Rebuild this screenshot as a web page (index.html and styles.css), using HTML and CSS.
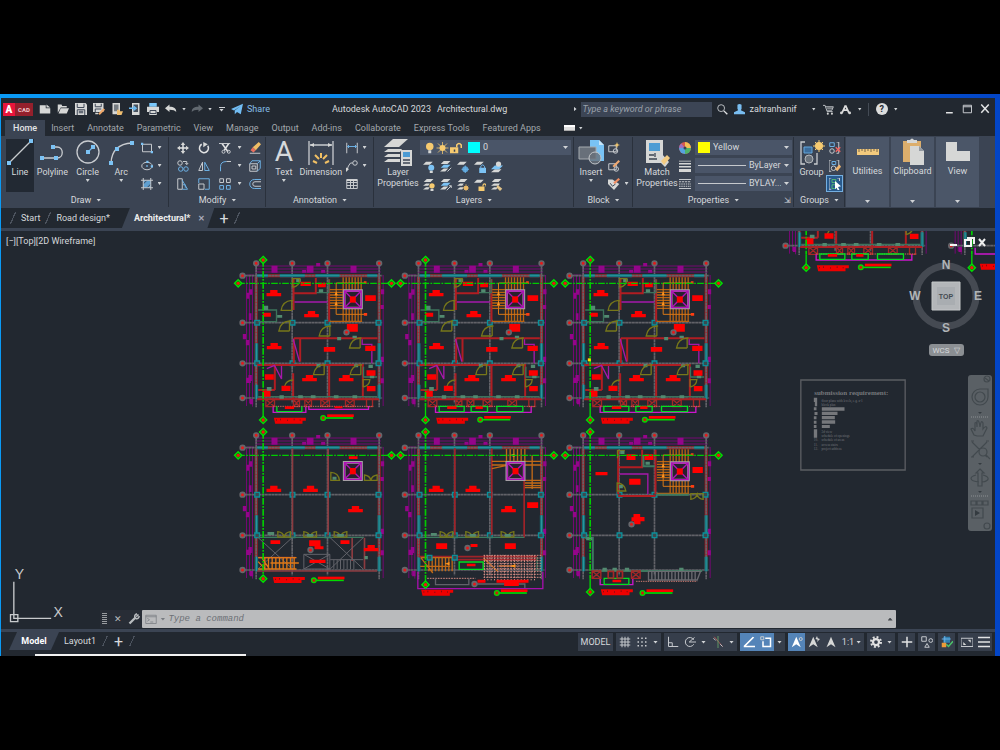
FILE: index.html
```html
<!DOCTYPE html>
<html lang="en">
<head>
<meta charset="utf-8">
<title>Autodesk AutoCAD 2023 - Architectural.dwg</title>
<link rel="stylesheet" href="styles.css">
</head>
<body>
<div class="window">
<header class="titlebar">
  <div class="quick">
    <button class="logo" aria-label="Application menu"><b>A</b><span>CAD</span></button>
    <button class="qi" aria-label="New"><svg viewBox="0 0 16 16"><path class="f" d="M1 3h8v4h6v7H1zM10 2l5 4h-5z"/></svg></button>
    <button class="qi" aria-label="Open"><svg viewBox="0 0 16 16"><path class="f" d="M1 13V2h5l1 2h6v2H5zM5 7h11l-3 7H2z"/></svg></button>
    <button class="qi" aria-label="Save"><svg viewBox="0 0 16 16"><path class="f" d="M0 0h14l2 2v14H0z"/><path class="k" d="M3 1v5h9V1M3 16V9h10v7M5 11h6M5 13h6"/></svg></button>
    <button class="qi" aria-label="Save as"><svg viewBox="0 0 16 16"><path class="f" d="M0 0h14v12H0z"/><path class="k" d="M3 1v4h8V1M3 12V8h8"/><path d="M7 14l7-7 2 2-7 7z" fill="#f0a868"/><path class="f" d="M3 13h4v2H3z"/></svg></button>
    <button class="qi" aria-label="Open from mobile"><svg viewBox="0 0 16 16"><path class="f" d="M2 0h10v15H2z"/><path d="M4 2h6v9H4z" fill="#777d83"/><path d="M8 9h3l1 2h4l-2 5H8z" fill="#eebd70"/></svg></button>
    <button class="qi" aria-label="Save to mobile"><svg viewBox="0 0 16 16"><path class="f" d="M4 0h10v16H4z"/><path d="M6 2h6v10H6z" fill="#47515d"/><path d="M0 6h6V3l5 4-5 4V8H0z" fill="#6bb9ef"/></svg></button>
    <button class="qi" aria-label="Plot"><svg viewBox="0 0 16 16"><path d="M3 0h10v5H3z" fill="#79c7fa"/><path class="f" d="M0 5h16v7h-3v4H3v-4H0z"/><path class="k" d="M4 10h8v4H4z"/></svg></button>
    <button class="qi" aria-label="Undo"><svg viewBox="0 0 16 16"><path class="f" d="M0 7l6-5v3c6 0 9 2 9 7-2-2-4-3-9-3v3z"/></svg></button>
    <span class="caret pad"></span>
    <button class="qi dim" aria-label="Redo"><svg viewBox="0 0 16 16"><path d="M16 7l-6-5v3C4 5 1 7 1 12c2-2 4-3 9-3v3z" fill="#626970"/></svg></button>
    <span class="caret pad"></span><span class="over"><i class="caret"></i></span>
    <button class="share"><svg viewBox="0 0 16 16"><path d="M0 8L16 1l-3 14-5-3-3 3v-5l8-6-9 6z" fill="#72bdf3"/></svg>Share</button>
  </div>
  <div class="doc-title"><span>Autodesk AutoCAD 2023</span><span>Architectural.dwg</span></div>
  <div class="account">
    <span class="right-arrow"></span>
    <input class="search" type="text" aria-label="Search" placeholder="Type a keyword or phrase">
    <button class="ai" aria-label="Search"><svg viewBox="0 0 16 16"><circle class="s" cx="6" cy="6" r="5"/><path class="s w2" d="M10 10l5 5"/></svg></button>
    <button class="ai" aria-label="User"><svg viewBox="0 0 16 16"><path d="M5 1q3-2 6 0v6l-1 2 6 3v3H0v-3l6-3-1-2z" fill="#79bdf0"/></svg></button>
    <span class="user">zahranhanif</span><span class="caret"></span>
    <button class="ai" aria-label="App store"><svg viewBox="0 0 16 16"><path class="s" d="M0 2h3l3 9h8M4 4h11l-2 5H6M6 6h8"/><circle class="f" cx="7" cy="14" r="1.500"/><circle class="f" cx="13" cy="14" r="1.500"/></svg></button>
    <button class="ai" aria-label="Autodesk"><svg viewBox="0 0 16 16"><path d="M8 2L3 13M8 2l5 11M5 9h6" fill="none" stroke="#ddd" stroke-width="2.500"/><circle class="f" cx="2" cy="13" r="2"/><circle class="f" cx="14" cy="13" r="2"/></svg></button>
    <span class="caret"></span><i class="vsep"></i>
    <button class="help" aria-label="Help">?</button><span class="caret"></span>
  </div>
  <div class="wincontrols">
    <button aria-label="Minimise"><svg viewBox="0 0 16 16"><path class="s w2" d="M4 13h9"/></svg></button>
    <button aria-label="Maximise"><svg viewBox="0 0 16 16"><path class="s" d="M3 3h11v10H3zM3 5h11"/></svg></button>
    <button aria-label="Close"><svg viewBox="0 0 16 16"><path class="s w2" d="M3 2l10 11M13 2L3 13"/></svg></button>
  </div>
</header>
<nav class="tabs">
  <button class="on">Home</button><button>Insert</button><button>Annotate</button><button>Parametric</button><button>View</button><button>Manage</button><button>Output</button><button>Add-ins</button><button>Collaborate</button><button>Express Tools</button><button>Featured Apps</button>
  <button class="mini" aria-label="Minimise ribbon"><i></i></button><span class="caret"></span>
</nav>
<section class="ribbon">
  <div class="panel draw">
    <div class="body">
      <button class="big sel"><svg viewBox="0 0 28 28"><path class="s" d="M3 24L25 2"/><path class="b" d="M1 22h4v4H1zM23 0h4v4h-4z"/></svg>Line</button>
      <button class="big"><svg viewBox="0 0 28 28"><path class="s" d="M4 19h15c7 0 7-11 0-11h-4"/><path class="b" d="M2 17h4v4H2zM16 17h4v4h-4zM13 6h4v4h-4z"/></svg>Polyline</button>
      <button class="big"><svg viewBox="0 0 28 28"><circle class="s" cx="14" cy="13" r="11"/><path class="sb" d="M14 13l5-5"/><path class="b" d="M12 11h4v4h-4zM17 6h4v4h-4z"/></svg>Circle<i class="caret"></i></button>
      <button class="big"><svg viewBox="0 0 28 28"><path class="s" d="M4 24Q5 5 25 4"/><path class="b" d="M2 22h4v4H2zM8 8h4v4H8zM23 2h4v4h-4z"/></svg>Arc<i class="caret"></i></button>
      <div class="grid g2">
        <button aria-label="Rectangle"><svg viewBox="0 0 16 16"><path class="s" d="M2 3h12v10H2z"/><path class="b" d="M0 1h3v3H0zM13 12h3v3h-3z"/></svg></button><i class="caret"></i>
        <button aria-label="Ellipse"><svg viewBox="0 0 16 16"><ellipse class="s" cx="8" cy="8" rx="7" ry="5"/><path class="b" d="M7 7h2v2H7zM13 7h3v3h-3zM7 1h3v3H7z"/></svg></button><i class="caret"></i>
        <button aria-label="Hatch"><svg viewBox="0 0 16 16"><path fill="#5f9fd0" d="M3 3h10v10H3z"/><path class="k" d="M3 8l5-5M8 13l5-5"/><path class="s" d="M3 0v16M13 0v16M0 3h16M0 13h16"/></svg></button><i class="caret"></i>
      </div>
    </div>
    <button class="ptitle">Draw<i class="caret"></i></button>
  </div>
  <div class="panel modify">
    <div class="body">
      <div class="grid g5">
        <button aria-label="Move"><svg viewBox="0 0 16 16"><path class="s w2" d="M8 2v12M2 8h12"/><path class="f" d="M8 0l3 4H5zM8 16l3-4H5zM0 8l4-3v6zM16 8l-4-3v6z"/></svg></button>
        <button aria-label="Rotate"><svg viewBox="0 0 16 16"><path class="s w2" d="M5 3a6 6 0 1 0 8 2"/><path class="f" d="M7 0l6 3-6 4z"/></svg></button>
        <button aria-label="Trim"><svg viewBox="0 0 16 16"><path class="s w2" d="M4 2l8 11M13 2L7 11"/><circle class="s" cx="6" cy="13" r="2"/><circle class="s" cx="13" cy="13" r="2"/><path class="s" d="M0 2h15"/></svg></button><i class="caret"></i>
        <button aria-label="Erase"><svg viewBox="0 0 16 16"><path d="M5 7l8-7 3 3-7 8z" fill="#eebd65"/><path d="M5 7l4 4-3 3-4-3z" fill="#e8705f"/><path class="s" d="M1 15h14"/></svg></button>
        <button aria-label="Copy"><svg viewBox="0 0 16 16"><circle class="s" cx="4" cy="4" r="3"/><circle class="sb" cx="5" cy="12" r="3"/><circle class="sb" cx="12" cy="12" r="3"/><path class="s" d="M8 2h5v4M11 4l2 2 2-2"/></svg></button>
        <button aria-label="Mirror"><svg viewBox="0 0 16 16"><path class="s" d="M6 3v11H1z"/><path class="sb" d="M9 3v11h6z"/></svg></button>
        <button aria-label="Fillet"><svg viewBox="0 0 16 16"><path class="sb" d="M2 15V9q0-7 8-7"/><path class="s" d="M10 2h6"/></svg></button><i class="caret"></i>
        <button aria-label="Explode"><svg viewBox="0 0 16 16"><path class="s" d="M1 5h10v10H1zM4 8h5v4H4z"/><path class="sb" d="M1 5l3-4h11v10l-4 4M11 5l4-4"/></svg></button>
        <button aria-label="Stretch"><svg viewBox="0 0 16 16"><path class="s" d="M1 1h6v14H1z"/><path class="sb" d="M7 3l7 12H7M8 9h3v4"/></svg></button>
        <button aria-label="Scale"><svg viewBox="0 0 16 16"><path class="sb" d="M1 7V1h14v14H9"/><path class="s" d="M1 8h7v7H1z"/></svg></button>
        <button aria-label="Array"><svg viewBox="0 0 16 16"><path class="s" d="M1 1h5v5H1zM10 1h5v5h-5z"/><path class="sb" d="M1 10h5v5H1zM10 10h5v5h-5z"/></svg></button><i class="caret"></i>
        <button aria-label="Offset"><svg viewBox="0 0 16 16"><path class="sb" d="M16 2H7a6 6 0 0 0 0 12h9"/><path class="s" d="M16 5H8a3 3 0 0 0 0 6h8"/></svg></button>
      </div>
    </div>
    <button class="ptitle">Modify<i class="caret"></i></button>
  </div>
  <div class="panel annot">
    <div class="body">
      <button class="big"><span class="letter">A</span>Text<i class="caret"></i></button>
      <button class="big"><svg viewBox="0 0 28 28"><path class="s" d="M2 2v24M26 2v24M3 6h22"/><path class="f" d="M3 6l4-2v4zM25 6l-4-2v4z"/><path d="M6 22l4 2M8 16l4 4M14 14v5M20 16l-4 4M22 22l-4 2" stroke="#f1c064" stroke-width="2"/></svg>Dimension</button>
      <div class="grid g2">
        <button aria-label="Linear"><svg viewBox="0 0 16 16"><path class="s" d="M1 1v14M15 1v14"/><path class="sb" d="M2 6h12M4 4L2 6l2 2M12 4l2 2-2 2"/></svg></button><i class="caret"></i>
        <button aria-label="Leader"><svg viewBox="0 0 16 16"><circle class="s" cx="12" cy="4" r="3"/><path class="s" d="M9 4H6Q3 7 1 14"/><path class="f" d="M0 10l4 2-4 4z"/></svg></button><i class="caret"></i>
        <button aria-label="Table"><svg viewBox="0 0 16 16"><path class="s" d="M1 2h14v12H1zM1 6h14M1 10h14M6 4v10M10 4v10"/><path class="f" d="M1 2h14v2H1z"/></svg></button>
      </div>
    </div>
    <button class="ptitle">Annotation<i class="caret"></i></button>
  </div>
  <div class="panel layers">
    <div class="body">
      <button class="big wide"><svg viewBox="0 0 28 28"><path class="f" d="M9 0h15l-9 8H0zM4 10h14l-2 3H0zM4 15h12v3H0zM4 20h12v3H0z"/><path class="f" d="M17 11h11v16H17z"/><path d="M19 13h7v5h-7z" fill="#4b9bd3"/><path class="k" d="M19 21h7M19 24h7"/></svg>Layer<br>Properties</button>
      <div class="layer-tools">
        <div class="combo"><svg class="states" viewBox="0 0 54 16"><circle cx="8" cy="6" r="5" fill="#f7cb70"/><path class="f" d="M6 11h4v4H6z"/><circle cx="25" cy="8" r="4" fill="#f7cb70"/><path d="M25 0v16M17 8h16M19 2l12 12M31 2L19 14" stroke="#f7cb70"/><path d="M35 7h11v8H35z" fill="#f7cb70"/><path d="M44 7V4q3-4 6 0v4" fill="none" stroke="#f7cb70" stroke-width="2"/><path fill="#3b4453" d="M40 10h2v3h-2z"/></svg><i class="swatch cyan"></i><select aria-label="Layer"><option>0</option></select><i class="caret"></i></div>
        <div class="grid gl">
          <button aria-label="Off"><svg viewBox="0 0 16 16"><path class="f" d="M4 1h9L9 5H0z"/><circle class="b" cx="11" cy="9" r="4"/><path class="f" d="M9 13h4v3H9z"/></svg></button>
          <button aria-label="Isolate"><svg viewBox="0 0 16 16"><path class="f" d="M5 0h9l-4 4H1z"/><path class="b" d="M5 5h9l-4 4H1z"/><path class="f" d="M5 10h6l-4 4H0z"/><path class="s" d="M10 14l5-5"/></svg></button>
          <button aria-label="Freeze"><svg viewBox="0 0 16 16"><path class="f" d="M4 1h9L9 5H0z"/><circle cx="11" cy="11" r="4" fill="#5ca3d7"/><path class="sb" d="M11 6v10M6 11h10"/></svg></button>
          <button aria-label="Lock"><svg viewBox="0 0 16 16"><path class="f" d="M4 1h9L9 5H0z"/><path class="b" d="M7 9h9v7H7z"/><path class="sb" d="M9 10V7q3-4 5 0v3"/></svg></button>
          <button aria-label="Make current"><svg viewBox="0 0 16 16"><path class="f" d="M5 11h9l-4 4H0z"/><path class="b" d="M5 6h11l-5 5H0z"/><circle class="f" cx="10" cy="4" r="3.500"/></svg></button>
          <button aria-label="On"><svg viewBox="0 0 16 16"><path class="f" d="M5 0h9l-4 4H1zM4 6h5l-2 3H0zM4 11h5l-2 3H0z"/><circle cx="12" cy="9" r="3.500" fill="#f7cb70"/><path class="f" d="M10 13h4v3h-4z"/></svg></button>
          <button aria-label="Unisolate"><svg viewBox="0 0 16 16"><path class="f" d="M5 0h9l-4 4H1z"/><path class="b" d="M5 5h9l-4 4H1z"/><path class="f" d="M5 10h6l-4 4H0z"/><path class="s" d="M9 15l6-6M12 9h3v3"/></svg></button>
          <button aria-label="Thaw"><svg viewBox="0 0 16 16"><path class="f" d="M5 0h9l-4 4H1zM4 6h5l-2 3H0zM4 11h5l-2 3H0z"/><circle cx="12" cy="12" r="3" fill="#e9b968"/><path d="M12 7v9M7 12h9M9 9l6 6M15 9l-6 6" stroke="#e9b968"/></svg></button>
          <button aria-label="Unlock"><svg viewBox="0 0 16 16"><path class="f" d="M4 1h9L9 5H0z"/><path d="M6 10h8v6H6z" fill="#f7cb70"/><path d="M12 10V8q2-3 4 0v2" fill="none" stroke="#f7cb70" stroke-width="1.500"/></svg></button>
          <button aria-label="Match layer"><svg viewBox="0 0 16 16"><path class="f" d="M5 0h9l-4 4H1zM4 6h8l-2 3H0zM4 11h5l-2 3H0z"/><path d="M9 8l6 5-3 3-5-5z" fill="#e2c489"/></svg></button>
        </div>
      </div>
    </div>
    <button class="ptitle">Layers<i class="caret"></i></button>
  </div>
  <div class="panel block">
    <div class="body">
      <button class="big"><svg viewBox="0 0 28 28"><path d="M13 1h9l5 5v16H13z" fill="#79c3f5"/><path d="M22 1v5h5z" fill="#c9e5f8"/><path d="M2 8h17v12H2z" fill="#68707a" stroke="#a6abb0"/><circle cx="18" cy="19" r="6" fill="#68707a" fill-opacity=".8" stroke="#c2c6c9"/></svg>Insert<i class="caret"></i></button>
      <div class="grid g2">
        <button aria-label="Create block"><svg viewBox="0 0 16 16"><path class="s" d="M1 5h10v8H1z"/><circle class="s" cx="10" cy="12" r="3"/><path d="M12 0l1 3 3 1-3 1-1 4-1-4-3-1 3-1z" fill="#f7cb70"/></svg></button><span></span>
        <button aria-label="Edit block"><svg viewBox="0 0 16 16"><path class="s" d="M1 5h10v8H1z"/><circle class="s" cx="11" cy="12" r="3"/><path d="M6 8l8-8 2 2-8 8z" fill="#f0a870"/></svg></button><span></span>
        <button aria-label="Edit attributes"><svg viewBox="0 0 16 16"><path class="f" d="M0 2h6l9 6-7 8-8-8z"/><path class="k" d="M3 7l3 4 4-3"/><path d="M7 6l7-6 2 2-7 6z" fill="#f08c60"/></svg></button><i class="caret"></i>
      </div>
    </div>
    <button class="ptitle">Block<i class="caret"></i></button>
  </div>
  <div class="panel props">
    <div class="body">
      <button class="big wide"><svg viewBox="0 0 28 28"><path class="f" d="M3 1h17v23H3z"/><path d="M6 4h11v8H6z" fill="#4c9cd4"/><path class="k" d="M6 16h5M6 20h8M12 14v4"/><path class="f" d="M14 13l5 2 7 8-4 5-7-7z"/><path d="M18 22l6-6 3 3-6 7z" fill="#f3cc83"/></svg>Match<br>Properties</button>
      <div class="prop-tools">
        <svg viewBox="0 0 16 16"><circle cx="8" cy="8" r="8" fill="#d65a50"/><path d="M8 8V0a8 8 0 0 1 8 8z" fill="#f3bf55"/><path d="M8 8h8a8 8 0 0 1-8 8z" fill="#4eb36a"/><path d="M8 8v8a8 8 0 0 1-8-8z" fill="#55a3df"/><path d="M8 8L0 8a8 8 0 0 1 3-6z" fill="#a06fc0"/><circle cx="8" cy="8" r="2" fill="#3b4453"/></svg>
        <div class="combo"><i class="swatch yellow"></i><select aria-label="Object colour"><option>Yellow</option></select><i class="caret"></i></div>
        <svg viewBox="0 0 16 16"><path class="f" d="M0 1h16v1H0zM0 4h16v2H0zM0 8h16v2H0zM0 12h16v4H0z"/></svg>
        <div class="combo"><i class="rule"></i><select aria-label="Lineweight"><option>ByLayer</option></select><i class="caret"></i></div>
        <svg viewBox="0 0 16 16"><path class="s" d="M0 2h16M0 14h16"/><path class="s" stroke-dasharray="3 1" d="M0 5h16"/><path class="s" stroke-dasharray="2 1" d="M0 8h16M0 11h16"/></svg>
        <div class="combo"><i class="rule"></i><select aria-label="Linetype"><option>BYLAY...</option></select><i class="caret"></i></div>
      </div>
    </div>
    <button class="ptitle">Properties<i class="caret"></i></button><span class="launcher">⇲</span>
  </div>
  <div class="panel groups">
    <div class="body">
      <button class="big"><svg viewBox="0 0 28 28"><path class="s" d="M7 3H3v22h4M16 25h3V14"/><path d="M6 8h8v6H6z" fill="#3c6d9c" stroke="#65a7dc"/><circle cx="11" cy="20" r="4" fill="#6b737c" stroke="#b4b8bc"/><circle cx="21" cy="7" r="4" fill="#f7cb70"/><path d="M21 1v12M15 7h12M17 3l8 8M25 3l-8 8" stroke="#f7cb70"/></svg>Group</button>
      <div class="grid g1">
        <button aria-label="Ungroup"><svg viewBox="0 0 16 16"><path class="sb" d="M1 1h6v5H1z"/><circle class="s" cx="4" cy="12" r="3"/><path class="s" d="M10 0h3v15h-3"/><path d="M9 7l6 6M15 7l-6 6" stroke="#ef6461" stroke-width="2"/></svg></button>
        <button aria-label="Group edit"><svg viewBox="0 0 16 16"><path class="s" d="M3 0H0v15h3M10 0h3v8"/><path class="sb" d="M4 2h5v4H4z"/><circle class="s" cx="6" cy="11" r="3"/><path d="M8 12l6-6 2 3-5 6z" fill="#f1b66f"/></svg></button>
        <button class="active" aria-label="Group selection"><svg viewBox="0 0 16 16"><path class="s" d="M3 0H0v15h3M11 0h3v4"/><path d="M4 2h5v4H4zM4 9h5v5H4z" fill="none" stroke="#5fd06e"/><path class="w" d="M8 4l8 7-4 1 2 4-2 1-2-4-2 2z"/></svg></button>
      </div>
    </div>
    <button class="ptitle">Groups<i class="caret"></i></button>
  </div>
  <button class="flap"><svg viewBox="0 0 28 28"><path d="M3 11h22v6H3z" fill="#f3ca7d"/><path d="M5 11v3M8 11v2M11 11v3M14 11v2M17 11v3M20 11v2M23 11v3" stroke="#77664a"/></svg>Utilities<i class="caret"></i></button>
  <button class="flap"><svg viewBox="0 0 28 28"><path d="M4 3h18v21H4z" fill="#dcae6c"/><path class="f" d="M8 5V2h3q2-3 4 0h3v3z"/><path class="f" d="M11 8h9l5 5v14H11z"/><path d="M20 8v5h5z" fill="#949aa2"/></svg>Clipboard<i class="caret"></i></button>
  <button class="flap"><svg viewBox="0 0 28 28"><path class="f" d="M2 4h11v9h13v10H2z"/></svg>View<i class="caret"></i></button>
</section>
<nav class="doctabs">
  <i class="slash"></i><button>Start</button><i class="slash"></i><button class="road">Road design*</button>
  <button class="current">Architectural*<span>✕</span></button><button class="plus" aria-label="New tab">+</button><i class="slash"></i>
</nav>
<main class="canvas">
<svg class="drawing" viewBox="3 693 2979 1194">
  <defs>
    <g id="bub"><circle r="7" fill="#e31a1a" stroke="#66666b" stroke-width="5"/></g>
    <g id="dia"><path d="M0-11L11 0 0 11-11 0z" fill="#0a7a12" stroke="#00e000" stroke-width="4"/><circle r="5" fill="#f21414"/></g>
    <g id="lbl"><path d="M-11-9H11V0H22V10H-22V0H-11z" fill="#fb0000"/></g>
    <g id="door"><path d="M0 0V-30H4M0 0H-32Q-28-28 0-30" fill="none" stroke="#77771a" stroke-width="4"/></g>
    <g id="dbl"><path d="M0 0V-16Q16-14 19 0 22-14 38-16V0z" fill="none" stroke="#77771a" stroke-width="4"/></g>
    <g id="col"><path d="M-7-7H7V7H-7z" fill="#3a4a50" stroke="#0a8f99" stroke-width="4"/></g>
    <g id="xb"><path d="M0 0H26V22H0zM0 0L26 22M26 0L0 22" fill="none" stroke="#a52727" stroke-width="4"/></g>
    <g id="lift"><path d="M0 0H52V52H0z" fill="#28202d" stroke="#a6a0a6" stroke-width="8"/><path d="M1 1H51V51H1zM1 1L51 51M51 1L1 51" fill="none" stroke="#b010b8" stroke-width="4"/><path d="M17 17H35V36H17z" fill="#fb0000"/></g>
    <g id="frame">
      <g stroke="#740873" fill="#94058a" stroke-width="3">
        <path d="M74 48H451M74 57H451M74 66H451M48 75H70M48 80V468M57 75V460M66 75V470M458 75V468M77 46V77M446 46V77M185 55V75M291 55V75" fill="none"/>
        <path stroke="none" d="M123 47h18v21h-18zM229 47h20v21h-20zM360 47h18v21h-18zM257 39h12v10h-12zM215 60h12v8h-12zM272 60h12v8h-12zM48 128h8v18h-8zM55 118h10v16h-10zM55 190h8v20h-8zM37 252h10v16h-10zM46 270h10v16h-10zM47 383h14v16h-14zM54 375h10v18h-10zM58 447h10v16h-10zM451 118h10v15h-10zM449 165h11v12h-11zM449 320h11v16h-11zM449 385h11v15h-11z"/>
      </g>
      <g fill="none"><path stroke="#a51b22" stroke-width="9" d="M77 80V446M446 80V446M80 77H446"/><path stroke="#626268" stroke-width="5" stroke-dasharray="9 1" d="M77 48V472M185 48V460M291 48V460M446 48V472M43 77H455M43 218H455M43 340H455M43 444H455"/><path stroke="#14727b" stroke-width="10" d="M80 77H112M148 77H223M255 77H327M410 77H440M78 280V338M78 404V448M446 280V338M446 404V448"/><path stroke="#38a8ae" stroke-width="2" d="M80 77H112M148 77H223M255 77H327M410 77H440M78 280V338M78 404V448M446 280V338M446 404V448"/></g>
      <use href="#bub" x="77" y="40"/><use href="#bub" x="185" y="40"/><use href="#bub" x="291" y="40"/><use href="#bub" x="446" y="40"/><use href="#bub" x="36" y="77"/><use href="#bub" x="36" y="218"/><use href="#bub" x="36" y="340"/><use href="#bub" x="36" y="444"/>
      <use href="#col" x="80" y="218"/><use href="#col" x="186" y="218"/><use href="#col" x="291" y="218"/><use href="#col" x="444" y="218"/><use href="#col" x="80" y="340"/><use href="#col" x="186" y="340"/><use href="#col" x="291" y="340"/><use href="#col" x="444" y="340"/>
    </g>
    <g id="cut"><path d="M23 100H483" stroke="#00cc00" stroke-width="4" stroke-dasharray="20 4 5 4"/><use href="#dia" x="23" y="100"/><use href="#dia" x="483" y="100"/><path d="M98 30V470" stroke="#00cc00" stroke-width="5" stroke-dasharray="20 4 5 4"/><use href="#dia" x="98" y="30"/></g>
    <g id="cap"><path d="M0 0H96V9H86V18H4z" fill="#ef0000"/><path d="M8 5v4M20 3v5M41 6v4M61 3v5M79 5v4" stroke="#501019" stroke-width="2"/></g>
    <g id="scale"><path d="M0 0H90" stroke="#00dc00" stroke-width="5"/><circle r="7" fill="#c92010" stroke="#00dc00" stroke-width="4"/><path fill="#f00" d="M12-11h80v8H12z"/></g>
    <g id="stairs" fill="none"><path d="M338 82V215M347 82V215M356 82V215M365 82V122M374 82V122M383 82V122M392 82V122M365 176V215M374 176V215M383 176V215M392 176V215M298 119H342M298 127H342M298 135H342M298 143H342M298 151H342M298 159H342M298 167H342M298 175H342M298 214H395" stroke="#b96311" stroke-width="4"/><path d="M405 99H317V193H405" stroke="#d87817" stroke-width="3"/><path d="M317 124l5 12h-10zM317 154l5 12h-10z" fill="#ff951e"/><path fill="#ff3c10" d="M400 94h8v8h-8zM400 189h10v8h-10z"/></g>
    <g id="typical">
      <use href="#frame"/>
      <g fill="none"><path stroke="#b01d22" stroke-width="6" d="M189 84V180M192 130H256V84M296 88V215M190 265H441M190 265V340M209 265V335M80 345H400M133 348V420M83 420H133M188 370V446M296 345V446M397 346V446M80 448H446"/>
      <path stroke="#a518aa" stroke-width="4" d="M192 156H291M188 267L207 335M395 268V283H424V340M109 356L132 346L153 387V348"/><path stroke="#3c735b" stroke-width="4" d="M83 180H138V215H83M258 128H295V88M399 350V381H440M83 440H440"/></g>
      <path fill="#528a70" d="M98 167h15v13H98zM140 195h15v8h-15zM265 118h13v9h-13zM197 86h14v11h-14zM320 261h12v10h-12zM366 257h13v8h-13zM258 342h12v10h-12zM371 343h12v9h-12zM414 344h13v10h-13zM109 411h14v12h-14zM147 436h13v10h-13zM203 436h14v9h-14zM241 436h14v9h-14zM310 436h14v9h-14zM366 436h14v9h-14zM418 376h13v9h-13z"/>
      <use href="#door" x="184" y="181"/><use href="#door" x="177" y="243"/><use href="#door" x="298" y="258"/><use href="#door" x="389" y="294"/><use href="#door" x="281" y="374"/><use href="#door" x="391" y="374"/><path d="M398 411V389H418Q417 406 398 411M186 112V86H208Q208 108 186 112M188 390Q166 391 162 410" fill="none" stroke="#77771a" stroke-width="4"/>
      <use href="#stairs"/><use href="#lift" x="341" y="122"/>
      <use href="#lbl" x="130" y="129"/><use href="#lbl" x="243" y="192"/><use href="#lbl" x="131" y="288"/><use href="#lbl" x="237" y="384"/><use href="#lbl" x="347" y="384"/><path fill="#fb0000" d="M210 95h31v13h-31zM262 98h24v14h-24zM97 188h24v12H97zM404 136h32v17h-32zM349 222h33v23h-33zM280 291h34v14h-34zM404 287h31v16h-31zM103 373h27v16h-27zM153 407h27v16h-27zM96 422h24v18H96zM408 361h27v16h-27zM409 408h26v16h-26z"/><use href="#bub" x="348" y="247"/>
      <use href="#xb" x="106" y="448"/><use href="#xb" x="271" y="448"/><use href="#xb" x="345" y="448"/><path fill="none" stroke="#a52727" stroke-width="4" d="M189 448h18v22h-18zM223 448h20v22h-20zM408 448h18v22h-18zM190 449l16 20M206 449l-16 20M224 449l18 20M242 449l-18 20"/>
      <path fill="none" stroke="#d06b60" stroke-width="3" stroke-dasharray="4 3" d="M128 469H430"/>
    </g>
  </defs>
  <g transform="translate(690 750)"><use href="#typical"/><path fill="none" stroke="#cc16cc" stroke-width="4" d="M128 470V487H226V470M235 468V478H414V468"/><path fill="none" stroke="#00df20" stroke-width="4" d="M139 469V485H214V469"/><path fill="#f00" d="M163 469h28v8h-28zM312 469h24v6h-24z"/><use href="#cut"/><path d="M98 470V510" stroke="#00dc00" stroke-width="4"/><use href="#dia" x="98" y="510"/><use href="#cap" x="130" y="503"/><use href="#scale" x="278" y="504"/></g>
  <g id="mid" transform="translate(1177 750)"><use href="#typical"/><path fill="none" stroke="#cc16cc" stroke-width="4" d="M128 470V487H415V470"/><path fill="none" stroke="#00df20" stroke-width="4" d="M139 469V485H214V469zM235 469V485H284V469zM312 469V485H390V469z"/><path fill="#f00" d="M163 469h28v8h-28zM248 469h22v8h-22z"/><use href="#cut"/><path d="M98 470V510" stroke="#00dc00" stroke-width="4"/><use href="#dia" x="98" y="510"/><use href="#cap" x="130" y="503"/><use href="#scale" x="262" y="509"/></g>
  <use href="#mid" x="494"/>
  <use href="#mid" x="1142" y="-457"/>
  <g transform="translate(2816 293)"><use href="#frame"/><use href="#cut"/><path d="M98 470V510" stroke="#00dc00" stroke-width="4"/><use href="#dia" x="98" y="510"/><use href="#cap" x="122" y="498"/><path fill="none" stroke="#cc16cc" stroke-width="4" d="M108 450V469H200"/></g>

  <g transform="translate(690 1266)"><use href="#frame"/></g>
  <g transform="translate(690 1275)">
    <g fill="none"><path stroke="#8c3b40" stroke-width="5" d="M186 70V330M293 70V330M80 438H440M402 338V432M365 338V408M83 398H195"/><path stroke="#3d795f" stroke-width="4" d="M83 337H400"/><path stroke="#62636a" stroke-width="3" d="M83 338L185 431M185 338L83 431M220 388L298 432M298 388L220 432M220 388H298V432H220zM299 338L398 432M398 338L299 432M299 404H398M310 404V432M320 404V432M330 404V432M340 404V432M350 404V432M360 404V432M370 404V432"/><path stroke="#de7817" stroke-width="4" d="M83 398H198M83 432H198M103 400V434M114 400V434M125 400V434M136 400V434M147 400V434M158 400V434M169 400V434M180 400V434M191 400V434M83 410L105 434M95 400L118 434M120 414H205"/></g>
    <use href="#lift" x="341" y="112"/><path fill="none" stroke="#77771a" stroke-width="4" d="M301 166V142Q324 143 327 166z"/><use href="#dbl" x="402" y="166"/><use href="#dbl" x="142" y="336"/><use href="#dbl" x="220" y="336"/><use href="#dbl" x="311" y="336"/><path fill="#528a70" d="M111 321h20v9h-20zM229 327h19v8h-19zM320 327h20v8h-20zM306 155h12v9h-12zM402 393h10v10h-10z"/>
    <use href="#lbl" x="130" y="191"/><use href="#lbl" x="240" y="191"/><use href="#lbl" x="375" y="252"/><use href="#lbl" x="422" y="369"/><path fill="#f00" d="M355 94h26v8h-26zM120 346h29v11h-29zM236 346h34v18h9v9h-27v-9h-16zM330 346h27v11h-27zM237 404h48v10h-48z"/><use href="#bub" x="240" y="375"/>
    <g transform="translate(0 -9)"><use href="#cut"/><use href="#dia" x="98" y="470"/></g><use href="#cap" x="127" y="456"/><use href="#scale" x="250" y="466"/>
  </g>
  <g transform="translate(1177 1266)"><use href="#frame"/></g>
  <g transform="translate(1185 1275)">
    <g fill="none"><path stroke="#9f2329" stroke-width="5" d="M178 70V330M289 70V330M386 165V338M69 395H425M184 404H425"/><path stroke="#3d795f" stroke-width="4" d="M72 337H386M425 396V438"/><path stroke="#c16a17" stroke-width="4" d="M333 72V110M344 72V110M355 72V110M366 72V110M377 72V110M388 72V110M289 109H437M289 120H437M289 131L334 121M388 166H437M388 174H437M388 182H437M388 188H437M410 91V192M76 398H184M100 398V439M110 398V439M120 398V439M130 398V439M140 398V439M150 398V439M160 398V439M170 398V439M74 424H164M76 398L112 444M264 400L308 440M310 423H356"/><path stroke="#d18a80" stroke-width="3" stroke-dasharray="5 3" d="M264 391H438M264 399H438M264 407H438M264 415H438M264 423H438M264 431H438M264 439H438M267 390V466M277 390V466M287 390V466M297 390V466M307 390V466M317 390V466M327 390V466M337 390V466M347 390V466M357 390V466M367 390V466M377 390V466M387 390V466M397 390V466M407 390V466M417 390V466M264 448H438M264 457H438M95 460H240"/><path stroke="#61616a" stroke-width="4" d="M120 460V479H220V460M242 477H388V490"/><path stroke="#a510ac" stroke-width="4" d="M67 440V491H442V440"/><path stroke="#00df20" stroke-width="4" d="M191 411H263V433H191z"/></g>
    <use href="#lift" x="334" y="112"/><use href="#dbl" x="134" y="336"/><use href="#dbl" x="211" y="336"/><use href="#dbl" x="317" y="336"/><path fill="#528a70" d="M106 324h18v8h-18zM223 327h18v8h-18zM328 327h18v8h-18z"/>
    <use href="#lbl" x="122" y="191"/><use href="#lbl" x="232" y="191"/><use href="#lbl" x="339" y="252"/><path fill="#f00" d="M395 232h33v17h-33zM122 355h33v17h-33zM328 355h33v17h-33zM225 357h21v9h-21zM214 416h26v8h-26zM246 464h24v9h-24zM303 464h96v9h-29v10h-44v-10h-23z"/><use href="#bub" x="216" y="369"/><use href="#bub" x="237" y="477"/><path d="M342 91l15-5v10zM148 416l14-5v10zM344 423l16-5v10z" fill="#ff951e"/><use href="#col" x="102" y="398"/><use href="#col" x="178" y="398"/>
    <g transform="translate(-8 -9)"><use href="#cut"/><path d="M98 470V488" stroke="#00dc00" stroke-width="4"/><use href="#dia" x="98" y="488"/></g><use href="#cap" x="77" y="494"/><use href="#scale" x="304" y="504"/>
  </g>
  <g transform="translate(1671 1266)"><use href="#frame"/><use href="#stairs"/><use href="#lift" x="341" y="122"/></g>
  <g transform="translate(1665 1275)">
    <g fill="none"><path stroke="#b01d22" stroke-width="6" d="M188 74V208M188 127H260V74M300 74V208M188 213H300"/><path stroke="#a518aa" stroke-width="4" d="M192 147H277V208"/><path stroke="#3d795f" stroke-width="6" d="M88 338H112V438H440M264 90V124H298M302 209H400"/><path stroke="#6a6a70" stroke-width="4" d="M279 439H435L425 465H279zM289 440V466M299 440V466M309 440V466M319 440V466M329 440V466M339 440V466M349 440V466M359 440V466M369 440V466M379 440V466M389 440V466M399 440V466M409 440V466M419 440V466"/><path stroke="#cc16cc" stroke-width="4" d="M134 459V479H232V459"/><path stroke="#00df20" stroke-width="4" d="M146 460H220V478H146z"/><path stroke="#d07b70" stroke-width="3" stroke-dasharray="4 3" d="M242 469H425"/></g>
    <path fill="none" stroke="#77771a" stroke-width="4" d="M185 198V174Q208 176 211 198zM186 100V77H208"/><path fill="none" stroke="#77771a" stroke-width="4" d="M406 206V223Q421 221 425 208 428 221 443 223V206z"/><path fill="#528a70" d="M194 77h13v10h-13zM270 110h13v9h-13zM190 180h12v10h-12zM141 428h13v9h-13zM171 428h13v9h-13zM208 428h13v9h-13zM371 428h13v9h-13zM92 337h18v9H92z"/>
    <path fill="#f00" d="M120 141h36v10h-36zM213 88h27v17h-27zM267 88h27v17h-27zM221 161h34v18h-34zM411 126h31v18h-31zM234 267h20v9h13v13h-12v9h-20v-9h-7v-12h6zM171 464h26v8h-26z"/><use href="#bub" x="228" y="298"/>
    <use href="#xb" x="110" y="438"/><use href="#xb" x="228" y="438"/><path fill="none" stroke="#a52727" stroke-width="5" d="M158 439h16v20h-16zM185 439h16v20h-16z"/>
    <g transform="translate(6 -9)"><use href="#cut"/><path d="M98 470V510" stroke="#00dc00" stroke-width="4"/><use href="#dia" x="98" y="510"/></g><use href="#cap" x="136" y="493"/><use href="#scale" x="261" y="504"/>
  </g>
  <path d="M1762 1075h9v9h-9z" fill="#ffe000"/>
  <path d="M2401 1140H2714V1410H2401z" fill="none" stroke="#5b5d62" stroke-width="4"/>
  <g class="notes"><text x="2441" y="1184" class="head" font-size="21">submission requirement:</text><g font-size="10"><text x="2463" y="1205">floor plans with levels, e.g. a-1</text><text x="2463" y="1219">block plan</text><text x="2463" y="1298">3d view</text><text x="2463" y="1311">schedule of openings</text><text x="2440" y="1324">10.</text><text x="2463" y="1324">schedule of areas</text><text x="2440" y="1337">11.</text><text x="2463" y="1337">access stairs</text><text x="2440" y="1350">12.</text><text x="2463" y="1350">project address</text></g><path d="M2440 1193h10v26h-7v-13h-3zM2440 1222h8v9h-8zM2442 1236h9v9h-9zM2440 1249h8v9h-8zM2440 1262h8v9h-8zM2440 1275h8v9h-8zM2440 1288h10v25h-10zM2464 1222h68v10h-68zM2464 1235h47v10h-47zM2464 1248h39v10h-39zM2464 1261h40v10h-40zM2464 1275h24v9h-24z"/></g>
  <g class="ucs"><path d="M40 1745V1855H152M30 1844H52V1865H30z"/><text x="43" y="1736">Y</text><text x="159" y="1851">X</text></g>
</svg>
<div class="viewlabel"><button>[−]</button><button>[Top]</button><button>[2D Wireframe]</button></div>
<div class="viewwin"><svg viewBox="0 0 40 12"><path d="M3 8h7M18 3h6v6h-6z" stroke="#f4f4f4" stroke-width="2" fill="none"/><path d="M20 1h7v6M32 2l6 7M38 2l-6 7" stroke="#eee" stroke-width="2" fill="none"/></svg></div>
<div class="cube">
  <svg viewBox="0 0 78 78"><circle cx="39" cy="39" r="30" fill="none" stroke="#454a52" stroke-width="7"/><path d="M25 25h28v28H25z" fill="#b3b6b9" stroke="#c4c7c8"/><path d="M30 30h18v18H30z" fill="#a9adb1"/><text x="39" y="42" class="top">TOP</text><text x="39" y="12">N</text><text x="39" y="75">S</text><text x="8" y="43">W</text><text x="71" y="43">E</text></svg>
  <button>WCS <span>▽</span></button>
</div>
<div class="navbar">
  <svg viewBox="0 0 24 156"><g fill="none" stroke="#42494e" stroke-width="1.200"><circle cx="19" cy="4" r="3"/><path d="M17 3l4 3M12 14h8v8a8 8 0 1 1-8-8z"/><circle cx="12" cy="22" r="5"/><path d="M6 60l-3-6q2-2 4 2V48q2-2 2 4v-6q2-2 3 6 1-8 3-4v6q3-4 4-1l-4 8H9zM4 67l15 15M19 67L4 82M3 66h3M18 66h3M3 82h3"/><circle cx="15" cy="77" r="4" fill="#5a6065"/><path d="M18 80l4 4M12 94l4 4h-2v13h-4V98H8zM8 100c-7 2-7 6 3 7M15 100c7 2 7 6-1 7M3 126h5v4H3zM9 126h5v4H9zM15 126h5v4h-5zM4 133h11v10H4z"/><circle cx="19" cy="151" r="3"/><path d="M3 42h17M3 121h17" stroke="#8b9093" stroke-dasharray="1 1"/></g><path d="M10 37h4l-2 2zM10 88h4l-2 2zM10 116h4l-2 2zM7 135l5 3-5 3z" fill="#343b40"/></svg>
</div>
<div class="command">
  <i class="grip"></i><button aria-label="Close command line">✕</button><button aria-label="Customise"><svg viewBox="0 0 16 16"><path d="M2 14l8-8" stroke="#b9bcbf" stroke-width="3"/><path d="M14 2l-3 3M10 7Q7 3 12 1M10 7q4 2 5-3" stroke="#b9bcbf" stroke-width="2" fill="none"/></svg></button>
  <div class="cmdbox"><svg viewBox="0 0 16 16"><path fill="none" stroke="#777b80" d="M1 3h14v11H1zM1 5h14M3 7l3 2-3 2M7 12h4"/></svg><i class="caret"></i><input type="text" aria-label="Command" placeholder="Type a command"><i class="up"></i></div>
</div>
</main>
<footer class="bottom">
  <div class="layouts"><button class="model">Model</button><button>Layout1</button><i class="slash"></i><button class="plus" aria-label="New layout">+</button><i class="slash"></i></div>
  <div class="status">
    <div><button class="txt">MODEL</button></div>
    <div><button aria-label="Grid"><svg viewBox="0 0 16 16"><path class="s" d="M4 1v14M8 1v14M12 1v14M1 4h14M1 8h14M1 12h14"/></svg></button><button aria-label="Snap"><svg viewBox="0 0 16 16"><path d="M2 3h13M2 8h13M2 13h13" stroke="#c9ccd0" stroke-width="2" stroke-dasharray="2 3"/></svg></button><i class="caret"></i></div>
    <div><button aria-label="Ortho"><svg viewBox="0 0 16 16"><path class="s" d="M2 1v13h13M2 9h5v5"/></svg></button><button aria-label="Polar"><svg viewBox="0 0 16 16"><path class="s" d="M13 5a6 6 0 1 0 0 6M7 8h9M7 8l7-6"/></svg></button><i class="caret"></i><button aria-label="Isodraft"><svg viewBox="0 0 16 16"><path d="M3 1l11 13" stroke="#cf615a"/><path d="M8 0v16" stroke="#6db36f"/><path class="s" d="M2 3l3 3M11 11l3 3"/></svg></button><i class="caret"></i></div>
    <div><button class="hot" aria-label="Object snap tracking"><svg viewBox="0 0 16 16"><path class="w" d="M1 13L13 1l2 1L4 13h12v2H1z"/></svg></button><button class="hot" aria-label="Object snap"><svg viewBox="0 0 16 16"><path class="s w1" d="M7 3h7v11H4V7"/><path class="s" d="M1 1h4v4H1z"/></svg></button><i class="caret"></i></div>
    <div><button class="hot" aria-label="Annotation visibility"><svg viewBox="0 0 16 16"><path class="w" d="M7 1l6 14-6-4-6 4z"/><circle class="s" cx="13" cy="4" r="2"/></svg></button><button aria-label="Auto scale"><svg viewBox="0 0 16 16"><path class="f" d="M7 1l6 14-6-4-6 4zM12 0l1 3 3 1-4 4 1-3-3-1z"/></svg></button><button aria-label="Annotation scale"><svg viewBox="0 0 16 16"><path class="f" d="M8 1l6 14-6-4-6 4z"/></svg></button><button class="txt ratio">1:1 <i class="caret"></i></button></div>
    <div><button aria-label="Workspace"><svg viewBox="0 0 16 16"><circle cx="8" cy="8" r="4" fill="none" stroke="#e0e0e0" stroke-width="3"/><circle cx="8" cy="8" r="6.500" fill="none" stroke="#e0e0e0" stroke-width="3" stroke-dasharray="2.500 2.600"/></svg></button><i class="caret"></i></div>
    <div><button aria-label="Add"><svg viewBox="0 0 16 16"><path class="s w2" d="M8 1v14M1 8h14"/></svg></button></div>
    <div><button aria-label="Isolate objects"><svg viewBox="0 0 16 16"><path class="s" d="M1 1h6v6H1zM8 10l3 5H5z"/><circle class="s" cx="13" cy="6" r="2.500"/></svg></button></div>
    <div><button aria-label="Graphics performance"><svg viewBox="0 0 16 16"><path d="M3 1h9v8H3z" fill="#2f7fae"/><path class="sb" d="M1 4h12M5 0v9"/><path d="M1 9h6v6H1z" fill="#ed9b38"/><path d="M7 11l3 3 6-7" fill="none" stroke="#4cc26a" stroke-width="2"/></svg></button></div>
    <div><button aria-label="Clean screen"><svg viewBox="0 0 16 16"><path class="s" d="M0 3h16v11H0z"/><path class="f" d="M9 5h4v4zM7 12H3V8z"/></svg></button><button aria-label="Customisation"><svg viewBox="0 0 16 16"><path class="s w2" d="M0 2h16M0 8h16M0 14h16"/></svg></button></div>
  </div>
</footer>
</div>
</body>
</html>
```

FILE: styles.css
```css
* { box-sizing: border-box; }
body { margin: 0; min-height: 100vh; background: #000; display: flex; flex-direction: column; justify-content: center; font-family: Roboto, "Open Sans", sans-serif; font-size: 9px; line-height: 11px; color: #d6d9dc; }
button, input, select { font: inherit; color: inherit; background: none; border: 0; padding: 0; margin: 0; appearance: none; }
button { display: flex; align-items: center; justify-content: center; white-space: nowrap; }
svg { display: block; }
.f { fill: #d6d7d6; }
.w { fill: #fff; }
.b { fill: #7cc3f5; }
.s { fill: none; stroke: #c9ccd0; stroke-width: 1.3; }
.sb { fill: none; stroke: #6db2e6; stroke-width: 1.3; }
.k { fill: none; stroke: #3b4453; stroke-width: 1.3; }
.w2 { stroke-width: 2; stroke: #e2e3e4; }
.w1 { stroke: #fff; stroke-width: 2; }
.caret { display: block; flex: none; width: 5px; height: 3px; background: #d0d3d6; clip-path: polygon(0 0, 100% 0, 50% 100%); }

.window { width: 100%; background: #222830; border-top: 4px solid; border-left: 1px solid #0b74a8; border-right: 5px solid #0344c8; border-image: linear-gradient(90deg, #0a9af5, #0a86ea 40%, #0345c6) 4 5 0 1; overflow: hidden; }

.titlebar { height: 22px; display: grid; grid-template-columns: 33% 24.6% 1fr auto; align-items: center; }
.quick, .account, .wincontrols { display: flex; align-items: center; }
.logo { width: 30px; height: 13px; margin-left: 2px; margin-right: 3px; background: #94202c; color: #fff; font-size: 6px; font-weight: 700; }
.logo b { width: 12px; height: 13px; background: #e8153b; font-size: 10px; line-height: 13px; }
.logo span { flex: 1; color: #f0c9cb; }
.qi { flex: none; width: 18px; height: 14px; }
.qi svg { width: 12px; height: 12px; }
.quick .pad { width: 4px; margin: 0 2px; }
.over { width: 6px; margin: 0 5px; border-top: 1px solid #d0d3d6; padding-top: 1px; }
.share { gap: 4px; color: #86bfe8; margin-left: 1px; }
.share svg { width: 12px; height: 12px; }
.doc-title { display: flex; gap: 6px; padding-left: 3px; }
.account { gap: 4px; }
.right-arrow { width: 3px; height: 5px; background: #d0d3d6; clip-path: polygon(0 0, 100% 50%, 0 100%); }
.search { flex: 1; min-width: 60px; max-width: 131px; height: 15px; background: #3c4555; padding: 0 2px; }
.search::placeholder { color: #9aa1aa; font-style: italic; opacity: 1; }
.ai svg { width: 11px; height: 11px; }
.ai { width: 13px; height: 14px; }
.account .caret { width: 4px; margin: 0 2px; }
.user { margin-right: 9px; }
.vsep { width: 1px; height: 13px; background: #444b55; }
.help { width: 12px; height: 12px; margin-left: 3px; border-radius: 50%; background: #dcdddd; color: #222830; font-weight: 700; }
.wincontrols { padding-right: 1px; }
.wincontrols button { width: 18px; height: 16px; }
.wincontrols svg { width: 12px; height: 12px; }

.tabs { height: 16px; display: flex; align-items: stretch; padding-left: 4px; color: #a4a9ae; }
.tabs button { padding: 0 7px 0 6px; }
.tabs .on { background: #3b4453; color: #e2e4e6; font-weight: 500; padding: 0 8px; }
.tabs .mini { padding: 0; margin: 0 4px 0 16px; }
.mini i { width: 11px; height: 6px; background: #dedede; border-top: 2px solid #fff; box-shadow: inset 0 -1px #aaa; }
.tabs .caret { align-self: center; width: 4px; }

.ribbon { height: 72px; display: flex; background: #3b4453; padding: 1px 16px 1px 3px; gap: 1px; }
.panel { position: relative; display: flex; flex-direction: column; border-right: 1px solid #2a313c; flex: 0 0 auto; }
.body { flex: 1; display: flex; padding-top: 2px; padding-left: 2px; }
.ptitle { height: 14px; gap: 5px; }
.draw { width: 165px; }
.modify { width: 96px; }
.annot { width: 107px; }
.layers { width: 199px; }
.block { width: 58px; }
.props { width: 160px; flex-grow: 1; }
.groups { width: 50px; }
.big { flex: 1 1 auto; flex-direction: column; justify-content: flex-start; height: 53px; line-height: 11px; }
.big > svg, .letter { width: 28px; height: 28px; }
.letter { font-size: 28px; line-height: 26px; }
.big .caret { margin-top: 1px; width: 4px; }
.wide { flex: 0 0 42px; }
.sel { background: #222933; flex-grow: 0; width: 28px; }
.grid { display: grid; grid-auto-rows: 17px; row-gap: 1px; align-items: center; justify-items: center; align-content: start; }
.grid button { width: 17px; height: 17px; }
.grid svg, .prop-tools svg { width: 12px; height: 12px; }
.grid .caret { width: 4px; }
.g2 { grid-template-columns: 17px 9px; margin-right: 4px; }
.g5 { flex: 1; grid-template-columns: 1fr 1fr 1fr 9px 1fr; }
.g1 { grid-template-columns: 17px; margin-right: 1px; }
.gl { grid-template-columns: repeat(5, 17px); }
.combo { display: flex; align-items: center; height: 15px; background: #4a5568; padding: 0 3px; gap: 3px; min-width: 0; }
.combo select { flex: 1; min-width: 0; height: 15px; line-height: 15px; }
.swatch { flex: none; width: 12px; height: 11px; }
.cyan { background: #00ffff; }
.yellow { background: #ffff00; }
.states { width: 42px; height: 12px; }
.layer-tools { flex: 1; display: flex; flex-direction: column; gap: 3px; padding: 1px 2px 0 1px; }
.prop-tools { flex: 1; min-width: 0; display: grid; grid-template-columns: 16px 1fr; grid-auto-rows: 15px; row-gap: 3px; align-content: start; align-items: center; padding: 1px 1px 0 1px; }
.rule { width: 48px; height: 1px; background: #c6c9cd; flex: none; }
.launcher { position: absolute; right: 2px; bottom: 1px; font-size: 8px; }
.active { background: #285a8d; border: 1px solid #75afe0; }
.flap { flex: 0 0 43px; flex-direction: column; justify-content: flex-start; background: #4b5668; margin-right: 1px; padding: 1px 0 4px; }
.flap svg { width: 28px; height: 28px; }
.flap .caret { margin-top: auto; }

.doctabs { height: 23px; display: flex; align-items: stretch; border-bottom: 3px solid #3b4453; padding-left: 8px; }
.doctabs button { padding: 0 4px; }
.slash { width: 6px; margin: 4px 1px; background: linear-gradient(115deg, transparent 44%, #4c535e 44% 56%, transparent 56%); }
.doctabs .road { margin-right: 8px; }
.doctabs .current { background: #3b4453; padding: 0 9px 0 12px; gap: 8px; font-weight: 700; color: #eee; clip-path: polygon(8px 0, 100% 0, calc(100% - 7px) 100%, 0 100%); }
.current span { font-size: 8px; color: #aab; }
.doctabs .plus { font-size: 16px; padding: 0 5px; }

.canvas { position: relative; aspect-ratio: 994 / 398; overflow: hidden; }
.drawing { position: absolute; inset: 0; width: 100%; height: 100%; }
.notes { fill: #75777b; font-family: "Liberation Serif", serif; }
.head { font-weight: 700; }
.ucs { fill: none; stroke: #c8cacc; stroke-width: 4; }
.ucs text { fill: #c8cacc; stroke: none; font: 42px "Liberation Sans", sans-serif; }
.viewlabel { position: absolute; left: 5px; top: 5px; display: flex; }
.viewwin { position: absolute; right: 8px; top: 6px; }
.viewwin svg { width: 40px; height: 12px; }
.cube { position: absolute; right: 10px; top: 26px; width: 78px; display: flex; flex-direction: column; align-items: center; }
.cube svg { width: 78px; height: 78px; overflow: visible; }
.cube text { font: 700 12px "Liberation Sans", sans-serif; fill: #b0b4b7; text-anchor: middle; }
.cube .top { font-size: 7px; fill: #454b52; }
.cube button { margin-top: 9px; width: 35px; height: 12px; border-radius: 3px; background: #8b8f93; color: #d6d8da; font-size: 8px; gap: 4px; }
.navbar { position: absolute; right: 3px; top: 144px; width: 24px; border-radius: 3px; background: #5a6065; }
.command { position: absolute; left: 10%; right: 10%; bottom: 1px; height: 18px; display: flex; align-items: center; background: #282d36; }
.grip { width: 5px; height: 12px; margin: 0 3px 0 2px; background: repeating-linear-gradient(#9a9da1 0 1px, transparent 1px 2px); }
.command button { width: 16px; height: 16px; color: #b9bcbf; }
.command svg { width: 12px; height: 12px; }
.cmdbox { flex: 1; height: 18px; display: flex; align-items: center; gap: 3px; padding: 0 3px; background: #babbbd; border-radius: 1px; }
.cmdbox .caret { background: #777b80; }
.cmdbox input { flex: 1; height: 16px; color: #50555b; font-family: "Liberation Mono", monospace; }
.cmdbox input::placeholder { color: #6c7076; font-style: italic; opacity: 1; }
.up { width: 5px; height: 3px; background: #44484d; clip-path: polygon(50% 0, 100% 100%, 0 100%); }

.bottom { height: 27px; border-top: 3px solid #3b4453; display: flex; justify-content: space-between; background: linear-gradient(#f2f2f2, #f2f2f2) 34px 100% / 211px 2px no-repeat; }
.layouts { display: flex; height: 18px; padding-left: 8px; }
.layouts button { padding: 0 5px; }
.layouts .model { width: 50px; background: #3b4453; color: #fff; font-weight: 700; clip-path: polygon(8px 0, 100% 0, calc(100% - 8px) 100%, 0 100%); }
.layouts .plus { font-size: 16px; }
.status { display: flex; gap: 3px; height: 18px; margin-top: 1px; padding-right: 3px; }
.status div { display: flex; align-items: center; background: #363e4b; }
.status button { width: 17px; height: 18px; }
.status svg { width: 12px; height: 12px; }
.status div > .caret { margin: 0 3px; }
.status .txt { width: 35px; }
.status .ratio { width: 25px; gap: 2px; }
.status .hot { background: #5484b8; }
```
